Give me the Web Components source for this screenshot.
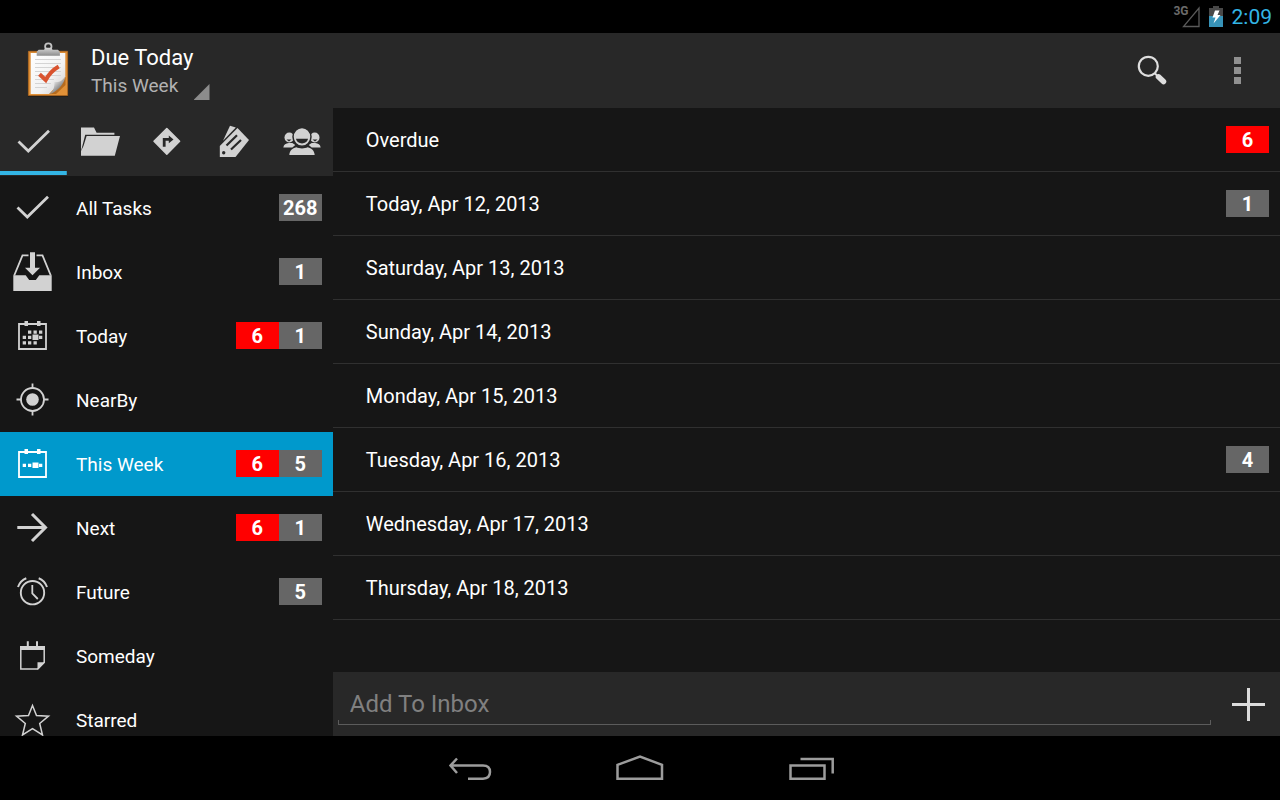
<!DOCTYPE html>
<html lang="en">
<head>
<meta charset="utf-8">
<meta name="viewport" content="width=device-width, initial-scale=1">
<title>Due Today</title>
<style>
    html, body {
        margin: 0;
        height: 100%;
        background: #000;
    }
    body {
        font-family: Roboto, "Noto Sans", sans-serif;
        font-size: 20px;
        color: #fff;
        --bar: #282828;
        --surface: #161616;
        --line: #303030;
        --icon: #d2d2d2;
        --accent: #33b5e5;
        --selected: #0099cc;
    }
</style>
</head>
<body>
<task-app></task-app>

<script>
const ICONS = {
    check: ['0 0 48 48', '<path d="M9.5 23.5L19.3 33 40 12.7" fill="none" stroke="currentColor" stroke-width="2.8"/>'],
    folder: ['0 0 48 48', `<path fill="currentColor" d="M5 9.5h13l2.600 5.200h17.800v2H9.200L6.600 27 5 33z"/>
        <path fill="currentColor" d="M10.600 18H44l-5.200 19.700H5V33l2.500-5z"/>`],
    sign: ['0 0 48 48', `<path fill="currentColor" stroke="currentColor" stroke-width="1.500" stroke-linejoin="round" d="M24.800 10.500l12.800 12.800-12.800 12.800L12 23.300z"/>
        <path fill="#282828" d="M20.800 28.700V20h6v-2.500l4.700 4-4.700 3.800v-2.600h-3.200v6z"/>`],
    tags: ['0 0 48 48', `<path fill="currentColor" d="M21 7.700l5.800 1.800L14 22.700z"/>
        <path fill="currentColor" d="M28.500 10L40 22 26.500 39H10.800V28z"/>
        <g stroke="#282828" stroke-width="2.200"><path d="M17.500 27.500l10.500-10.300M22 31.500l10-9.500"/></g>
        <circle cx="14.700" cy="34.700" r="1.700" fill="#282828"/>`],
    people: ['0 0 48 48', `<g fill="currentColor">
        <ellipse cx="13.300" cy="19.500" rx="4.800" ry="5"/><ellipse cx="38.700" cy="19.500" rx="4.800" ry="5"/>
        <path d="M7.300 29.500c.5-3 2.500-4 5.500-4.500h3.500l3 2-3 2.500zM44.700 29.500c-.5-3-2.500-4-5.500-4.500h-3.500l-3 2 3 2.500z"/>
        <ellipse cx="26" cy="18.800" rx="9" ry="9.400" stroke="#282828" stroke-width="1.500"/>
        <path d="M13.300 37c.5-4.500 3-6.700 7-7.700 3 1.500 8.400 1.500 11.400 0 4 1 6.500 3.200 7 7.700z"/></g>
        <path fill="#282828" d="M20 20.800h12c-.8 3.400-3.300 4.600-6 4.600s-5.200-1.200-6-4.600z"/>
        <path fill="#282828" d="M10.500 21.500h5l-2.500 2zM36.500 21.500h5l-2.500 2z"/>`],
    inbox: ['0 0 48 48', `<path fill="none" stroke="currentColor" stroke-width="1.800" d="M20.500 7.300h-6L6.200 27.500M28.500 7.300h6L42.800 27.500"/>
        <path fill="currentColor" d="M5.300 27.300h12.400l3.500 4.700h6.600l3.500-4.700h12.400V43H5.300z"/>
        <path fill="currentColor" d="M22 4.300h5v15.400h5l-7.500 7.500-7.500-7.500h5z"/>`],
    month: ['0 0 48 48', `<path fill="none" stroke="currentColor" stroke-width="1.800" d="M11 12h27v25H11z"/>
        <path fill="currentColor" d="M16.500 9h3.500v5h-3.500zM29 9h3.500v5H29zM20 18.500h3.300v3.300H20zM25.500 18.500h3.300v3.300h-3.300zM31 18.500h3.300v3.300H31zM14.700 23.800H18v3.300h-3.300zM20 23.800h3.300v3.300H20zM24.500 22.500h6V28h-6zM31 23.800h3.300v3.300H31zM14.700 29.200H18v3.300h-3.300zM20 29.200h3.300v3.300H20zM25.500 29.200h3.300v3.300h-3.300z"/>`],
    week: ['0 0 48 48', `<path fill="none" stroke="currentColor" stroke-width="1.800" d="M11 12h27v25H11z"/>
        <path fill="currentColor" d="M16.500 9h3.500v5h-3.500zM29 9h3.500v5H29zM14.700 23.800H18v3.300h-3.300zM20 23.800h3.300v3.300H20zM24.500 22.500h6V28h-6zM31 23.800h3.300v3.300H31z"/>`],
    nearby: ['0 0 48 48', `<g fill="none" stroke="currentColor" stroke-width="1.800"><circle cx="24.500" cy="23.500" r="11.500"/>
        <path d="M24.500 7.500V12M24.500 35v4.500M8.500 23.500H13M36 23.500h4.500"/></g><circle cx="24.500" cy="23.500" r="6.300" fill="currentColor"/>`],
    arrow: ['0 0 48 48', '<path fill="none" stroke="currentColor" stroke-width="3" d="M9.300 23.500H37M24 10l13.500 13.500L24 37"/>'],
    alarm: ['0 0 48 48', `<g fill="none" stroke="currentColor"><circle cx="24.500" cy="24.700" r="11.700" stroke-width="1.900"/>
        <path stroke-width="1.800" d="M24.300 17v8.500l5.500 5.500"/>
        <path stroke-width="2" d="M10 19c1.500-4 4-7 8.300-8.700M39 19c-1.500-4-4-7-8.300-8.700"/></g>`],
    note: ['0 0 48 48', `<path fill="none" stroke="currentColor" stroke-width="1.500" d="M12.800 15v21.900h17L36.200 30.500V15"/>
        <path fill="currentColor" d="M12 14h25v4H12zM18.800 9.300h2V15h-2zM28 9.300h2V15h-2zM29.500 30.300H37L29.500 37.700z"/>`],
    star: ['0 0 48 48', '<path fill="none" stroke="currentColor" stroke-width="1.500" d="M24.500 9.500l4 10 12 .7-8.800 7.300 2.800 11.500-10-6.300-10 6.300 2.800-11.500-8.800-7.300 12-.7z"/>'],
    search: ['0 0 48 48', `<circle cx="20.300" cy="19.300" r="9.500" fill="none" stroke="currentColor" stroke-width="2.200"/>
        <path stroke="currentColor" stroke-width="2" d="M26.500 26l3 3"/><path stroke="currentColor" stroke-width="5.500" stroke-linecap="round" d="M30.500 29.800l5 4.800"/>`],
    more: ['0 0 48 48', '<path fill="currentColor" d="M21 10h7v7h-7zM21 20h7v7h-7zM21 30h7v7h-7z"/>'],
    plus: ['0 0 48 48', '<path stroke="currentColor" stroke-width="3" d="M24.500 8v33M8 24.500h33"/>'],
    back: ['0 0 48 32', '<path fill="none" stroke="currentColor" stroke-width="2.500" d="M12 3.500L5.500 10.500 12 18M5.500 10.500H38q7 0 7 6.500t-7 6.700H23"/>'],
    home: ['0 0 48 32', '<path fill="none" stroke="currentColor" stroke-width="2.500" d="M1.500 9.800L24 1.500 46 9.800v14H1.500z"/>'],
    recent: ['0 0 48 32', '<path fill="none" stroke="currentColor" stroke-width="2.500" d="M3.500 10.500h34v13.200h-34zM13.500 4h32.200v14.500"/>'],
    battery: ['0 0 16 24', `<path fill="#484848" d="M5 1h6v2h4v9H1V3h4z"/><path fill="#3793b8" d="M1 11h14v11H1z"/>
        <path fill="#fff" d="M7 5.500h4.500L9.500 10h3L5.500 18.500 7.500 12.500H4.500z"/>`],
    signal: ['0 0 20 24', '<path fill="none" stroke="#5a5a5a" stroke-width="1.300" d="M2.500 21.500H18V3z"/>'],
    clipboard: ['0 0 60 64', `<defs>
        <linearGradient id="wood" x2="0" y2="1"><stop stop-color="#d98a35"/><stop offset="1" stop-color="#e29238"/></linearGradient>
        <linearGradient id="page" x2="1" y2="1"><stop stop-color="#fff"/><stop offset=".6" stop-color="#f2f2f2"/><stop offset="1" stop-color="#ccc"/></linearGradient>
        <linearGradient id="curl" x2=".6" y2=".7"><stop stop-color="#fff"/><stop offset=".4" stop-color="#f4f4f4"/><stop offset="1" stop-color="#8a8a8a"/></linearGradient>
        <linearGradient id="metal" x2="0" y2="1"><stop stop-color="#d8d8d8"/><stop offset="1" stop-color="#8c8c8c"/></linearGradient></defs>
        <path fill="#111" opacity=".6" d="M8 58h40v2H8z"/>
        <path fill="url(#wood)" stroke="#b96c1d" stroke-width=".7" d="M8.400 14.300h39.200v44.300H8.400z"/>
        <path fill="#b56b1f" d="M45.500 40v8L36 57h-7z"/>
        <path fill="url(#page)" d="M10.700 16h34.600v24L29 57H10.700z"/>
        <path stroke="#d4d4d4" d="M15 22.500h26M15 26.500h26M15 30.500h26M15 34.500h26M15 38.500h26M15 42.500h19M15 46.500h16M15 50.500h12"/>
        <path fill="url(#curl)" d="M45.300 39c-2 5-6 6.500-11 6 .5 5-1 10.500-5.800 12.200C36 56 45 47 45.300 39z"/>
        <path fill="none" stroke="#d9532f" stroke-width="4" d="M19.500 37.300l6.200 5.700c3-5.500 7-10 13-13.500"/>
        <circle cx="28.300" cy="9.500" r="3.200" fill="none" stroke="#c4c4c4" stroke-width="1.800"/>
        <path fill="url(#metal)" d="M16.700 18.700v-4l2-2h5.300l1.500-2h5.600l1.500 2h5.300l2 2v4z"/>`]
};

class UiIcon extends HTMLElement {
    connectedCallback() {
        const [box, shapes] = ICONS[this.getAttribute('name')];
        const [, , w, h] = box.split(' ');
        this.attachShadow({ mode: 'open' }).innerHTML = `
        <style>
            :host { display: block; flex: none; }
            svg { display: block; }
        </style>
        <svg viewBox="${box}" width="${w}" height="${h}" aria-hidden="true">${shapes}</svg>
        `;
    }
}

class StatusBar extends HTMLElement {
    constructor() {
        super();
        this.attachShadow({ mode: 'open' }).innerHTML = `
        <style>
            :host {
                display: flex;
                justify-content: flex-end;
                align-items: center;
                height: 33px;
                padding: 1px 8px 0 0;
                box-sizing: border-box;
                flex: none;
            }
            .net { font-size: 12px; font-weight: bold; line-height: 12px; color: #6b6b6b; align-self: flex-start; padding-top: 4px; margin-right: -8px; }
            .battery { margin: 0 8px 0 7px; }
            time { font-size: 21px; color: var(--accent); }
        </style>
        <span class="net">3G</span>
        <ui-icon name="signal"></ui-icon>
        <ui-icon class="battery" name="battery"></ui-icon>
        <time>2:09</time>
        `;
    }
}

class ActionBar extends HTMLElement {
    constructor() {
        super();
        this.attachShadow({ mode: 'open' }).innerHTML = `
        <style>
            :host {
                display: flex;
                align-items: center;
                height: 75px;
                padding: 0 1px 0 20px;
                box-sizing: border-box;
                background: var(--bar);
                flex: none;
            }
            button { border: 0; padding: 0; margin: 0; background: none; color: inherit; font: inherit; text-align: left; }
            .logo { margin-bottom: 3px; }
            .spinner {
                display: flex;
                align-items: flex-end;
                padding-top: 3px;
                margin: 0 auto 0 11px;
            }
            .titles { display: grid; }
            .title { font-size: 22px; line-height: 28px; }
            .sub { font-size: 19px; line-height: 28px; color: #b2b2b2; }
            .caret {
                width: 16px;
                height: 16px;
                background: #8c8c8c;
                clip-path: polygon(100% 0, 100% 100%, 0 100%);
            }
            .action { width: 85px; display: grid; place-items: center; color: #dedede; }
            .more { color: #909090; }
        </style>
        <ui-icon class="logo" name="clipboard"></ui-icon>
        <button class="spinner" type="button">
            <span class="titles">
                <span class="title"><slot name="title"></slot></span>
                <span class="sub"><slot name="subtitle"></slot></span>
            </span>
            <span class="caret"></span>
        </button>
        <button class="action" type="button" aria-label="Search"><ui-icon name="search"></ui-icon></button>
        <button class="action more" type="button" aria-label="More options"><ui-icon name="more"></ui-icon></button>
        `;
    }
}

class ViewTabs extends HTMLElement {
    constructor() {
        super();
        const tabs = [['check', 'Tasks'], ['folder', 'Folders'], ['sign', 'Contexts'], ['tags', 'Tags'], ['people', 'People']];
        this.attachShadow({ mode: 'open' }).innerHTML = `
        <style>
            :host { display: grid; grid-template-columns: repeat(5, 1fr); padding-bottom: 1px; background: var(--bar); flex: none; }
            button {
                border: 0;
                padding: 10px 0 9px;
                background: none;
                color: var(--icon);
                display: grid;
                justify-items: center;
            }
            button[aria-pressed=true] {
                background: linear-gradient(var(--accent), var(--accent)) bottom / 100% 4px no-repeat;
            }
        </style>
        ${tabs.map(([icon, label], i) => `<button type="button" aria-label="${label}" aria-pressed="${i === 0}"><ui-icon name="${icon}"></ui-icon></button>`).join('')}
        `;
    }
}

class CountBadge extends HTMLElement {
    constructor() {
        super();
        this.attachShadow({ mode: 'open' }).innerHTML = `
        <style>
            :host {
                display: block;
                width: 43px;
                padding-top: 1px;
                line-height: 26px;
                text-align: center;
                font-weight: bold;
                color: #fff;
                background: #666;
            }
            :host([overdue]) { background: #f00; }
        </style>
        <slot></slot>
        `;
    }
}

class NavItem extends HTMLElement {
    connectedCallback() {
        this.attachShadow({ mode: 'open' }).innerHTML = `
        <style>
            :host { display: block; flex: none; }
            a {
                display: flex;
                align-items: center;
                height: 64px;
                padding: 0 11px 0 8px;
                color: #fff;
                text-decoration: none;
            }
            :host([selected]) a { background: var(--selected); }
            ui-icon { color: var(--icon); margin-right: 20px; }
            :host([selected]) ui-icon { color: #fff; }
            .label { flex: 1; font-size: 19px; }
            ::slotted(count-badge) { margin-bottom: 1px; }
        </style>
        <a href="#${this.getAttribute('icon')}">
            <ui-icon name="${this.getAttribute('icon')}"></ui-icon>
            <span class="label"><slot></slot></span>
            <slot name="count"></slot>
        </a>
        `;
    }
}

class DayRow extends HTMLElement {
    constructor() {
        super();
        this.attachShadow({ mode: 'open' }).innerHTML = `
        <style>
            :host {
                display: flex;
                align-items: center;
                justify-content: space-between;
                height: 64px;
                box-sizing: border-box;
                padding: 0 11px 0 33px;
                border-bottom: 1px solid var(--line);
            }
        </style>
        <span><slot></slot></span>
        <slot name="count"></slot>
        `;
    }
}

class QuickAdd extends HTMLElement {
    constructor() {
        super();
        this.attachShadow({ mode: 'open' }).innerHTML = `
        <style>
            :host { display: block; background: var(--bar); flex: none; }
            form { display: flex; align-items: center; height: 64px; padding: 0 8px 0 5px; gap: 13px; }
            input {
                flex: 1;
                min-width: 0;
                height: 42px;
                box-sizing: border-box;
                border: 0;
                border-radius: 0;
                outline: 0;
                padding: 0 12px;
                margin: 0;
                font: inherit;
                font-size: 24px;
                color: #fff;
                background:
                    linear-gradient(#5c5c5c, #5c5c5c) left bottom / 1px 5px no-repeat,
                    linear-gradient(#5c5c5c, #5c5c5c) right bottom / 1px 5px no-repeat,
                    linear-gradient(#5c5c5c, #5c5c5c) bottom / 100% 1px no-repeat;
            }
            input::placeholder { color: #808080; opacity: 1; }
            button { border: 0; padding: 0; background: none; color: #dcdcdc; }
        </style>
        <form>
            <input type="text" placeholder="Add To Inbox" aria-label="Add To Inbox">
            <button type="button" aria-label="Add"><ui-icon name="plus"></ui-icon></button>
        </form>
        `;
    }
}

class SystemNav extends HTMLElement {
    constructor() {
        super();
        this.attachShadow({ mode: 'open' }).innerHTML = `
        <style>
            :host { display: flex; justify-content: center; gap: 123px; height: 64px; flex: none; }
            button { border: 0; padding: 5px 0 0; background: none; color: #9c9c9c; }
        </style>
        <button type="button" aria-label="Back"><ui-icon name="back"></ui-icon></button>
        <button type="button" aria-label="Home"><ui-icon name="home"></ui-icon></button>
        <button type="button" aria-label="Recent apps"><ui-icon name="recent"></ui-icon></button>
        `;
    }
}

// icon, label, overdue count, open count
const LISTS = [
    ['check', 'All Tasks', 0, 268],
    ['inbox', 'Inbox', 0, 1],
    ['month', 'Today', 6, 1],
    ['nearby', 'NearBy', 0, 0],
    ['week', 'This Week', 6, 5],
    ['arrow', 'Next', 6, 1],
    ['alarm', 'Future', 0, 5],
    ['note', 'Someday', 0, 0],
    ['star', 'Starred', 0, 0]
];

const DAYS = [
    ['Overdue', 6, 0],
    ['Today, Apr 12, 2013', 0, 1],
    ['Saturday, Apr 13, 2013', 0, 0],
    ['Sunday, Apr 14, 2013', 0, 0],
    ['Monday, Apr 15, 2013', 0, 0],
    ['Tuesday, Apr 16, 2013', 0, 4],
    ['Wednesday, Apr 17, 2013', 0, 0],
    ['Thursday, Apr 18, 2013', 0, 0]
];

class TaskApp extends HTMLElement {
    constructor() {
        super();
        this.attachShadow({ mode: 'open' });
        this.render();
    }

    render() {
        this.shadowRoot.innerHTML = this._getTemplate();
    }

    _getCounts(overdue, open) {
        return (overdue ? `<count-badge slot="count" overdue>${overdue}</count-badge>` : '')
            + (open ? `<count-badge slot="count">${open}</count-badge>` : '');
    }

    _getTemplate() {
        return `
        <style>
            :host { display: flex; flex-direction: column; height: 100vh; overflow: hidden; }
            main { flex: 1; min-height: 0; display: grid; grid-template-columns: 26% 1fr; grid-template-rows: 100%; background: var(--surface); }
            aside, section { display: flex; flex-direction: column; min-width: 0; min-height: 0; }
            nav, .days { flex: 1; min-height: 0; overflow: hidden; }
        </style>
        <status-bar></status-bar>
        <action-bar><span slot="title">Due Today</span><span slot="subtitle">This Week</span></action-bar>
        <main>
            <aside>
                <view-tabs></view-tabs>
                <nav>
                    ${LISTS.map(([icon, label, overdue, open]) => `<nav-item icon="${icon}"${label === 'This Week' ? ' selected' : ''}>${label}${this._getCounts(overdue, open)}</nav-item>`).join('')}
                </nav>
            </aside>
            <section>
                <div class="days">
                    ${DAYS.map(([label, overdue, open]) => `<day-row>${label}${this._getCounts(overdue, open)}</day-row>`).join('')}
                </div>
                <quick-add></quick-add>
            </section>
        </main>
        <system-nav></system-nav>
        `;
    }
}

customElements.define('ui-icon', UiIcon);
customElements.define('status-bar', StatusBar);
customElements.define('action-bar', ActionBar);
customElements.define('view-tabs', ViewTabs);
customElements.define('count-badge', CountBadge);
customElements.define('nav-item', NavItem);
customElements.define('day-row', DayRow);
customElements.define('quick-add', QuickAdd);
customElements.define('system-nav', SystemNav);
customElements.define('task-app', TaskApp);
</script>
</body>
</html>
